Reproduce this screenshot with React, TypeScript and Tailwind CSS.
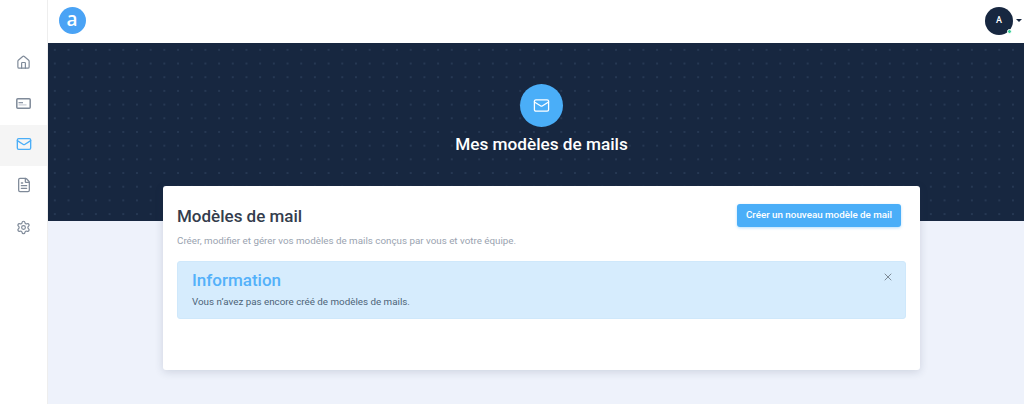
import { Home, Mail, FileText, Settings, X } from "lucide-react";

export default function App() {
  return (
    <div className="flex h-[404px] w-[1024px] overflow-hidden bg-[#eef2fb] font-['Roboto',sans-serif]">
      <aside className="flex w-[48px] shrink-0 flex-col items-stretch border-r border-[#eeeeee] bg-white pt-[43px]">
        <div className="flex h-[41px] items-center justify-center pb-[2px]">
          <Home size={15} strokeWidth={1.9} className="text-[#7f8a99]" />
        </div>
        <div className="flex h-[41px] items-center justify-center pb-[2px]">
          <svg width="15" height="11" viewBox="0 0 15 11" fill="none">
            <rect x="0.8" y="0.8" width="13.4" height="9.4" rx="1" stroke="#7f8a99" strokeWidth="1.5" />
            <rect x="2.5" y="4" width="4.5" height="1.3" fill="#8f99a8" />
            <rect x="2.5" y="6.4" width="8" height="1" fill="#c0c6d0" />
          </svg>
        </div>
        <div className="flex h-[41px] items-center justify-center pb-[3px] bg-[#f5f5f5]">
          <Mail size={16} strokeWidth={2} className="text-[#4aaef8]" />
        </div>
        <div className="flex h-[41px] items-center justify-center pb-[3px]">
          <FileText size={16} strokeWidth={1.9} className="text-[#7f8a99]" />
        </div>
        <div className="flex h-[41px] items-center justify-center pt-[0px]">
          <Settings size={15} strokeWidth={1.9} className="text-[#7f8a99]" />
        </div>
      </aside>
      <div className="flex min-w-0 flex-1 flex-col">
        <header className="flex h-[43px] shrink-0 items-center justify-between bg-white pb-[2px] pl-[10.5px] pr-[2px]">
          <div className="flex h-[27px] w-[27px] items-center justify-center rounded-full bg-[#4aa3f5] pb-[2px] font-['Open_Sans',sans-serif] text-[19px] font-semibold leading-none text-white">
            a
          </div>
          <div className="flex items-center gap-[3px]">
            <div className="relative flex h-[28px] w-[28px] items-center justify-center rounded-full bg-[#172740] text-[9px] font-medium text-white">
              A
              <span className="absolute bottom-[1px] right-[1px] h-[5px] w-[5px] rounded-full border border-white bg-[#3fd29b]" />
            </div>
            <span className="h-0 w-0 border-x-[3px] border-t-[3px] border-x-transparent border-t-[#172740]" />
          </div>
        </header>
        <section className="flex h-[178px] shrink-0 flex-col items-center bg-[#172740] bg-[radial-gradient(#263853_0.7px,transparent_1px)] bg-[length:13.7px_13.7px] pl-[11px] pt-[41px]">
          <div className="flex h-[43px] w-[43px] items-center justify-center rounded-full bg-[#4aaef8]">
            <Mail size={17} strokeWidth={1.8} className="text-white" />
          </div>
          <h1 className="mt-[4px] text-[17.2px] font-medium leading-[27px] text-white">Mes modèles de mails</h1>
        </section>
        <main className="flex-1 pl-[115px]">
          <div className="relative -mt-[35px] h-[184px] w-[757px] rounded-[3px] bg-white px-[14px] pt-[17px] shadow-[0_2px_8px_rgba(40,50,80,0.16)]">
            <div className="flex items-start justify-between pr-[5px]">
              <h2 className="text-[17px] font-medium leading-[27px] text-[#343d4d]">Modèles de mail</h2>
              <button className="mt-[1px] h-[23px] w-[164px] rounded-[3px] bg-[#4aaef8] text-[9.8px] font-medium text-white shadow-[0_1px_3px_rgba(74,174,248,0.4)]">
                Créer un nouveau modèle de mail
              </button>
            </div>
            <p className="mt-[4px] text-[9.8px] leading-[14px] text-[#9aa3b0]">
              Créer, modifier et gérer vos modèles de mails conçus par vous et votre équipe.
            </p>
            <div className="relative mt-[13px] h-[58px] rounded-[3px] border border-[#cfe8fb] bg-[#d6ecfd] px-[14px] pt-[7px]">
              <div className="text-[17px] font-medium leading-[22px] text-[#53b1fa]">Information</div>
              <p className="mt-[4px] text-[9.8px] leading-[14px] text-[#4d6478]">
                Vous n’avez pas encore créé de modèles de mails.
              </p>
              <X size={12} strokeWidth={2} className="absolute right-[11px] top-[9px] text-[#7d8a96]" />
            </div>
          </div>
        </main>
      </div>
    </div>
  );
}
